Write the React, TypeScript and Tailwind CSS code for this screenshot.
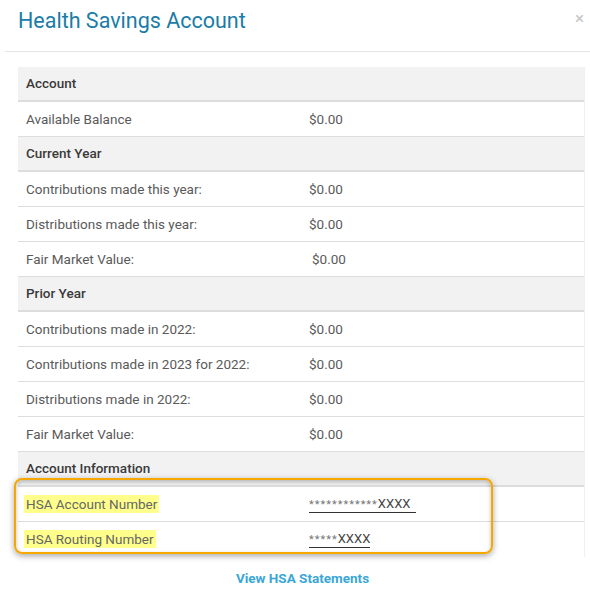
import React from 'react';

type Row = { label: string; value?: string; header?: boolean; valueOffset?: boolean };

const rows: Row[] = [
  { label: 'Account', header: true },
  { label: 'Available Balance', value: '$0.00' },
  { label: 'Current Year', header: true },
  { label: 'Contributions made this year:', value: '$0.00' },
  { label: 'Distributions made this year:', value: '$0.00' },
  { label: 'Fair Market Value:', value: '$0.00', valueOffset: true },
  { label: 'Prior Year', header: true },
  { label: 'Contributions made in 2022:', value: '$0.00' },
  { label: 'Contributions made in 2023 for 2022:', value: '$0.00' },
  { label: 'Distributions made in 2022:', value: '$0.00' },
  { label: 'Fair Market Value:', value: '$0.00' },
  { label: 'Account Information', header: true },
];

function TableRow({ row }: { row: Row }) {
  if (row.header) {
    return (
      <div className="h-[35px] flex items-center px-2 bg-[#f2f2f2] border-b-2 border-[#dddddd] text-[13.5px] text-[#3a3a3a] font-medium">
        {row.label}
      </div>
    );
  }
  return (
    <div className="h-[35px] flex items-center px-2 border-b border-[#dddddd] text-[13.5px] text-[#5a5a5a]">
      <div className="w-[283px] shrink-0">{row.label}</div>
      <div className={row.valueOffset ? 'pl-[3px]' : ''}>{row.value}</div>
    </div>
  );
}

export default function App() {
  return (
    <div className="w-[590px] h-[591px] bg-white overflow-hidden" style={{ fontFamily: 'Roboto, "Liberation Sans", sans-serif' }}>
      {/* Cabecera */}
      <div className="h-[52px] flex items-start justify-between pl-[13px] pr-[4px] pt-[6px] ml-[5px] border-b border-[#e5e5e5]">
        <h1 className="text-[21.5px] text-[#1a7ca8] font-normal leading-[30px]">Health Savings Account</h1>
        <span className="text-[17px] text-[#c4c4c4] leading-none pt-[4px] pr-[2px]">×</span>
      </div>

      <div className="pl-[18px] pr-[5px] pt-[15px]">
        <div className="border-r border-[#f0f0f0]">
          {rows.map((r, i) => (
            <TableRow key={i} row={r} />
          ))}

          {/* Datos de cuenta resaltados */}
          <div className="relative">
            <div className="h-[35px] flex items-center px-2 border-b border-[#dddddd] text-[13.5px] text-[#666]">
              <div className="w-[283px] shrink-0">
                <span className="bg-[#ffff8c] px-[2px] -mx-[2px] py-[1px]">HSA Account Number</span>
              </div>
              <div className="border-b border-[#333] pr-[6px] leading-[15px]">
                <span className="text-[11px] text-[#777] tracking-[1px]">************</span>
                <span className="text-[13px] text-[#444]">XXXX</span>
              </div>
            </div>
            <div className="h-[35px] flex items-center px-2 text-[13.5px] text-[#666]">
              <div className="w-[283px] shrink-0">
                <span className="bg-[#ffff8c] px-[2px] -mx-[2px] py-[1px]">HSA Routing Number</span>
              </div>
              <div className="border-b border-[#333] leading-[15px]">
                <span className="text-[11px] text-[#777] tracking-[1px]">*****</span>
                <span className="text-[13px] text-[#444]">XXXX</span>
              </div>
            </div>
            <div className="absolute left-[-4px] top-[-9px] w-[479px] h-[76px] rounded-[8px] border-[2.5px] border-[#f6a800] shadow-[0_2px_6px_rgba(0,0,0,0.35),inset_0_2px_4px_rgba(0,0,0,0.25)] pointer-events-none" />
          </div>
        </div>

        <div className="text-center pt-[9px] pl-[2px]">
          <a className="text-[13.5px] font-bold text-[#3aa6d8]">View HSA Statements</a>
        </div>
      </div>
    </div>
  );
}
